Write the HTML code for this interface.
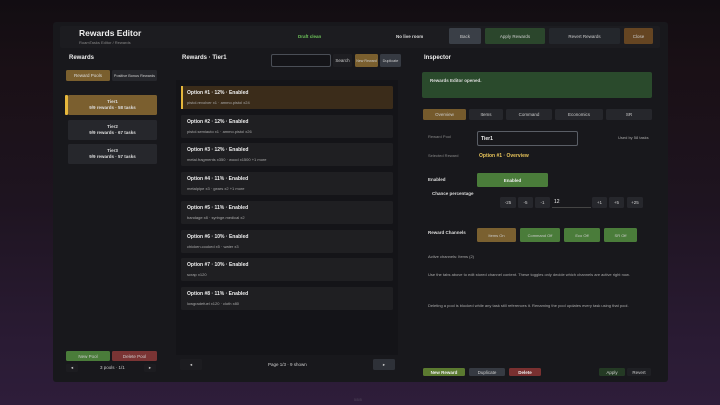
<!DOCTYPE html><html><head><meta charset="utf-8"><style>
*{margin:0;padding:0;box-sizing:border-box}
body{width:720px;height:405px;overflow:hidden;position:relative;font-family:"Liberation Sans Narrow","Liberation Sans",sans-serif;color:#ddd;
background:linear-gradient(180deg,#120d12 0%,#1a1016 18%,#1e1420 50%,#2a1b34 85%,#2e1d3a 100%)}
div{position:absolute}
.b{display:flex;align-items:center;justify-content:center;font-size:4.5px;color:#ccc;border-radius:1.5px;white-space:nowrap;overflow:hidden}
.t{white-space:nowrap}
.opt{left:181px;width:212px;height:23px;background:#1f1f22;border-radius:1.5px}
.opt .h{left:6px;top:4px;font-size:5px;font-weight:bold;color:#eee}
.opt .s{left:6px;top:14px;font-size:4px;color:#aaa}
.card{left:68px;width:89px;height:20px;background:#26272c;border-radius:1.5px;text-align:center;font-size:4.5px;font-weight:bold;color:#ddd;line-height:6px;padding-top:4px}
</style></head><body>
<div style="left:53px;top:22px;width:615px;height:360px;background:#18181c;border-radius:3px"></div>
<div style="left:60px;top:26px;width:600px;height:22px;background:#1c1c20;border-radius:2px"></div>
<div class="t" style="left:79px;top:28px;font-size:8.5px;font-weight:bold;color:#eee">Rewards Editor</div>
<div class="t" style="left:79px;top:40px;font-size:4px;color:#888">RoamTasks Editor / Rewards</div>
<div class="t" style="left:298px;top:34px;font-size:4.5px;font-weight:bold;color:#6ec45a">Draft clean</div>
<div class="t" style="left:396px;top:34px;font-size:4.5px;font-weight:bold;color:#ddd">No live room</div>
<div class="b" style="left:449px;top:28px;width:32px;height:16px;background:#3a3f47">Back</div>
<div class="b" style="left:485px;top:28px;width:60px;height:16px;background:#2b462c">Apply Rewards</div>
<div class="b" style="left:549px;top:28px;width:71px;height:16px;background:#24272c">Revert Rewards</div>
<div class="b" style="left:624px;top:28px;width:29px;height:16px;background:#654522">Close</div>

<!-- left -->
<div class="t" style="left:69px;top:55px;font-size:6px;font-weight:bold;color:#eee">Rewards</div>
<div class="b" style="left:66px;top:70px;width:44px;height:11px;background:#7a5f2e;color:#ddd">Reward Pools</div>
<div class="b" style="left:112px;top:70px;width:45px;height:11px;background:#26272c;font-size:3.8px">Positive Bonus Rewards</div>
<div style="left:65px;top:95px;width:3px;height:20px;background:#e6b73c;border-radius:1px"></div>
<div class="card" style="top:95px;background:#7b5f2f">Tier1<br>9/9 rewards · 58 tasks</div>
<div class="card" style="top:120px">Tier2<br>9/9 rewards · 67 tasks</div>
<div class="card" style="top:144px">Tier3<br>9/9 rewards · 57 tasks</div>
<div class="b" style="left:66px;top:351px;width:44px;height:10px;background:#4a7c3a">New Pool</div>
<div class="b" style="left:112px;top:351px;width:45px;height:10px;background:#7a3434">Delete Pool</div>
<div class="b" style="left:66px;top:364px;width:12px;height:8px;background:#1c1c20">◂</div>
<div class="b" style="left:144px;top:364px;width:12px;height:8px;background:#1c1c20">▸</div>
<div class="t" style="left:100px;top:365px;font-size:4.5px;color:#ccc">3 pools · 1/1</div>

<!-- middle -->
<div style="left:176px;top:80px;width:222px;height:275px;background:#141418"></div>
<div class="t" style="left:182px;top:55px;font-size:6px;font-weight:bold;color:#eee">Rewards · Tier1</div>
<div style="left:271px;top:54px;width:60px;height:13px;background:#141418;border:1px solid #4a4e56;border-radius:2px"></div>
<div class="b" style="left:333px;top:54px;width:19px;height:13px;background:#1e1e22">Search</div>
<div class="b" style="left:355px;top:54px;width:23px;height:13px;background:#7a5f2e;font-size:3.6px">New Reward</div>
<div class="b" style="left:380px;top:54px;width:21px;height:13px;background:#363a42;font-size:3.8px">Duplicate</div>
<div class="opt" style="top:86px;background:#3b2c1a"><div style="left:0;top:0;width:2px;height:23px;background:#e6b73c"></div><div class="h t">Option #1 · 12% · Enabled</div><div class="s t">pistol.revolver x1 · ammo.pistol x24</div></div>
<div class="opt" style="top:115px"><div class="h t">Option #2 · 12% · Enabled</div><div class="s t">pistol.semiauto x1 · ammo.pistol x26</div></div>
<div class="opt" style="top:143px"><div class="h t">Option #3 · 12% · Enabled</div><div class="s t">metal.fragments x350 · wood x1500 +1 more</div></div>
<div class="opt" style="top:172px"><div class="h t">Option #4 · 11% · Enabled</div><div class="s t">metalpipe x3 · gears x2 +1 more</div></div>
<div class="opt" style="top:201px"><div class="h t">Option #5 · 11% · Enabled</div><div class="s t">bandage x8 · syringe.medical x2</div></div>
<div class="opt" style="top:230px"><div class="h t">Option #6 · 10% · Enabled</div><div class="s t">chicken.cooked x5 · water x3</div></div>
<div class="opt" style="top:258px"><div class="h t">Option #7 · 10% · Enabled</div><div class="s t">scrap x120</div></div>
<div class="opt" style="top:287px"><div class="h t">Option #8 · 11% · Enabled</div><div class="s t">lowgradefuel x120 · cloth x80</div></div>
<div class="b" style="left:180px;top:359px;width:22px;height:11px;background:#1c1c20">◂</div>
<div class="t" style="left:268px;top:362px;font-size:4.5px;color:#ccc">Page 1/3 · 9 shown</div>
<div class="b" style="left:373px;top:359px;width:22px;height:11px;background:#2e3138">▸</div>

<!-- right -->
<div class="t" style="left:424px;top:55px;font-size:6px;font-weight:bold;color:#eee">Inspector</div>
<div style="left:422px;top:72px;width:230px;height:26px;background:#2a4a2c;border-radius:2px"></div>
<div class="t" style="left:430px;top:78px;font-size:4.5px;font-weight:bold;color:#ddd">Rewards Editor opened.</div>
<div class="b" style="left:423px;top:109px;width:43px;height:11px;background:#755a2c">Overview</div>
<div class="b" style="left:469px;top:109px;width:34px;height:11px;background:#26272c">Items</div>
<div class="b" style="left:506px;top:109px;width:46px;height:11px;background:#26272c">Command</div>
<div class="b" style="left:555px;top:109px;width:48px;height:11px;background:#26272c">Economics</div>
<div class="b" style="left:606px;top:109px;width:46px;height:11px;background:#26272c">SR</div>
<div class="t" style="left:428px;top:134px;font-size:4px;color:#888">Reward Pool</div>
<div style="left:477px;top:131px;width:101px;height:15px;background:#18181c;border:1px solid #5a5e66;border-radius:2px"></div>
<div class="t" style="left:481px;top:136px;font-size:5px;color:#eee;font-weight:bold">Tier1</div>
<div class="t" style="left:618px;top:135px;font-size:4px;color:#aaa">Used by 58 tasks</div>
<div class="t" style="left:428px;top:153px;font-size:4px;color:#888">Selected Reward</div>
<div class="t" style="left:479px;top:153px;font-size:5px;font-weight:bold;color:#e8c45a">Option #1 · Overview</div>
<div class="t" style="left:428px;top:177px;font-size:4.5px;font-weight:bold;color:#ddd">Enabled</div>
<div class="b" style="left:477px;top:173px;width:71px;height:14px;background:#4a7c3a;font-weight:bold;color:#eee">Enabled</div>
<div class="t" style="left:432px;top:191px;font-size:4.5px;font-weight:bold;color:#ddd">Chance percentage</div>
<div class="b" style="left:500px;top:197px;width:16px;height:11px;background:#26272c">-25</div>
<div class="b" style="left:518px;top:197px;width:15px;height:11px;background:#26272c">-5</div>
<div class="b" style="left:535px;top:197px;width:15px;height:11px;background:#26272c">-1</div>
<div style="left:552px;top:197px;width:39px;height:11px;background:#18181c;border-bottom:1px solid #444"></div>
<div class="t" style="left:554px;top:199px;font-size:5px;color:#eee">12</div>
<div class="b" style="left:592px;top:197px;width:15px;height:11px;background:#26272c">+1</div>
<div class="b" style="left:609px;top:197px;width:15px;height:11px;background:#26272c">+5</div>
<div class="b" style="left:627px;top:197px;width:16px;height:11px;background:#26272c">+25</div>
<div class="t" style="left:428px;top:230px;font-size:4.5px;font-weight:bold;color:#ddd">Reward Channels</div>
<div class="b" style="left:477px;top:228px;width:39px;height:14px;background:#7a6030;font-size:4px">Items On</div>
<div class="b" style="left:520px;top:228px;width:40px;height:14px;background:#4a7c3a;font-size:4px">Command Off</div>
<div class="b" style="left:564px;top:228px;width:36px;height:14px;background:#4a7c3a;font-size:4px">Eco Off</div>
<div class="b" style="left:604px;top:228px;width:33px;height:14px;background:#4a7c3a;font-size:4px">SR Off</div>
<div class="t" style="left:428px;top:254px;font-size:4px;color:#aaa">Active channels: Items (2)</div>
<div class="t" style="left:428px;top:272px;font-size:4px;color:#aaa">Use the tabs above to edit stored channel content. These toggles only decide which channels are active right now.</div>
<div class="t" style="left:428px;top:303px;font-size:4px;color:#aaa">Deleting a pool is blocked while any task still references it. Renaming the pool updates every task using that pool.</div>
<div class="b" style="left:423px;top:368px;width:42px;height:8px;background:#5b7a30;font-weight:bold;color:#eee">New Reward</div>
<div class="b" style="left:469px;top:368px;width:36px;height:8px;background:#363a42">Duplicate</div>
<div class="b" style="left:509px;top:368px;width:32px;height:8px;background:#7a3030;font-weight:bold;color:#eee">Delete</div>
<div class="b" style="left:599px;top:368px;width:26px;height:8px;background:#243a24">Apply</div>
<div class="b" style="left:627px;top:368px;width:24px;height:8px;background:#1f2024">Revert</div>
<div class="t" style="left:354px;top:398px;font-size:3.5px;color:#554a5e">5/5/5</div>
</body></html>
